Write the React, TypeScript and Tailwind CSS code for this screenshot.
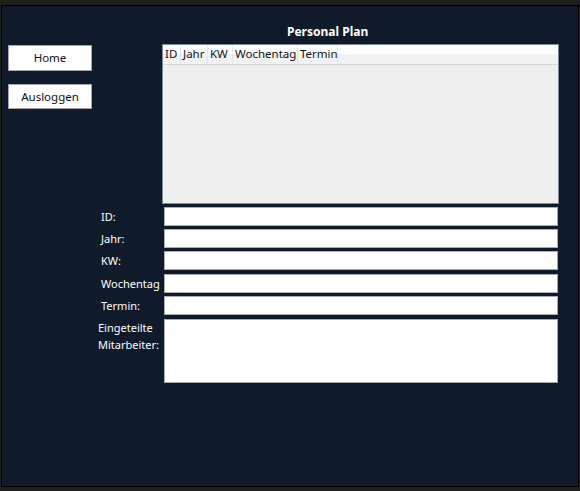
import React from "react";

const font = { fontFamily: '"Noto Sans", "Open Sans", Arial, sans-serif' };

function Row({ label, mt, h = "h-[19px]" }: { label: string; mt: string; h?: string }) {
  return (
    <div className={`flex items-center ${mt}`}>
      <div className="w-[63px] text-[11px] leading-[16px] text-white">{label}</div>
      <div className={`w-[394px] ${h} bg-white border border-[#a9abb0]`} />
    </div>
  );
}

export default function App() {
  return (
    <div className="w-[580px] h-[491px] bg-[#1e1e1e] pt-[5px] pl-[1px]" style={font}>
      <div className="w-[578px] h-[482px] border border-black bg-[#0f1a2b] flex flex-col">
        <div className="pl-[285px] pt-[18px] text-[12px] leading-[16px] font-bold text-white h-[38px]">
          Personal Plan
        </div>
        <div className="flex">
          <div className="ml-[6px] w-[84px] pt-[1px] flex flex-col">
            <div className="h-[26px] bg-white border border-[#a3a3a3] flex items-center justify-center text-[11.5px] text-[#111]">
              Home
            </div>
            <div className="mt-[13px] h-[25px] bg-white border border-[#a3a3a3] flex items-center justify-center text-[11.5px] text-[#111]">
              Ausloggen
            </div>
          </div>
          <div className="ml-[70px] w-[397px] h-[160px] border border-[#7d8a9c] bg-[#efefef] flex flex-col">
            <div className="h-[20px] flex border-b border-[#d5d5d5] bg-gradient-to-b from-white from-50% to-[#f1f2f4] to-50% text-[11.5px] text-[#111] leading-[18px]">
              <div className="w-[18px] pl-[2px] border-r border-[#e3e5e8]">ID</div>
              <div className="w-[27px] pl-[2px] border-r border-[#e3e5e8]">Jahr</div>
              <div className="w-[25px] pl-[2px] border-r border-[#e3e5e8]">KW</div>
              <div className="w-[65px] pl-[2px] border-r border-[#e3e5e8]">Wochentag</div>
              <div className="w-[40px] pl-[2px] border-r border-[#e3e5e8]">Termin</div>
            </div>
          </div>
        </div>
        <div className="ml-[99px] mt-[3px] flex flex-col">
          <Row label="ID:" mt="mt-0" />
          <Row label="Jahr:" mt="mt-[3px]" />
          <Row label="KW:" mt="mt-[3px]" />
          <Row label="Wochentag" mt="mt-[4px]" />
          <Row label="Termin:" mt="mt-[3px]" />
          <div className="flex items-start mt-[4px]">
            <div className="w-[63px] -ml-[3px] text-[11px] leading-[17px] text-white whitespace-nowrap">
              Eingeteilte
              <br />
              Mitarbeiter:
            </div>
            <div className="ml-[3px] w-[394px] h-[64px] bg-white border border-[#a9abb0]" />
          </div>
        </div>
      </div>
    </div>
  );
}
